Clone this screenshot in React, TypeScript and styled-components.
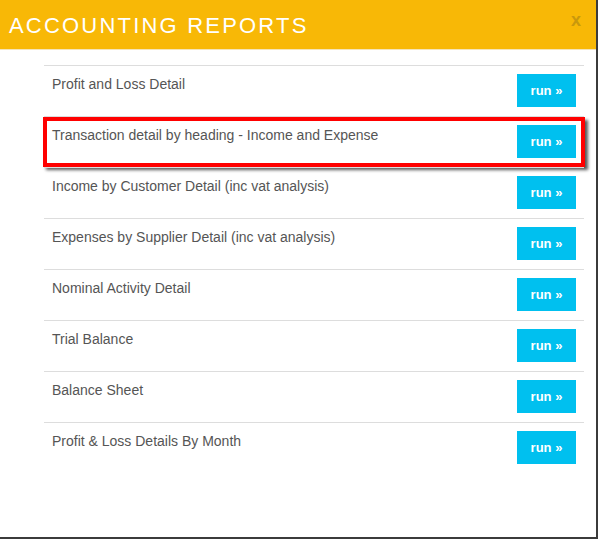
import React from "react";
import styled, { createGlobalStyle } from "styled-components";

const GlobalStyle = createGlobalStyle`
  html, body {
    margin: 0;
    padding: 0;
    background: #ffffff;
  }
  body {
    font-family: "Liberation Sans", Arial, sans-serif;
  }
`;

const reports = [
  "Profit and Loss Detail",
  "Transaction detail by heading - Income and Expense",
  "Income by Customer Detail (inc vat analysis)",
  "Expenses by Supplier Detail (inc vat analysis)",
  "Nominal Activity Detail",
  "Trial Balance",
  "Balance Sheet",
  "Profit & Loss Details By Month",
];

const Modal = styled.div`
  width: 598px;
  height: 539px;
  box-sizing: border-box;
  background: #ffffff;
  border-right: 2px solid #3b3b3b;
  border-bottom: 2px solid #3b3b3b;
  display: flex;
  flex-direction: column;
`;

const Header = styled.div`
  height: 49px;
  background: #f8b806;
  border-bottom: 1px solid #f5e4b8;
  display: flex;
  align-items: center;
  justify-content: space-between;
  padding: 0 15px 0 9px;
`;

const Title = styled.h1`
  margin: 0;
  margin-top: 2px;
  font-family: "Liberation Sans", Arial, sans-serif;
  font-weight: normal;
  font-size: 22px;
  letter-spacing: 2.2px;
  color: #ffffff;
`;

const Close = styled.span`
  font-family: "Liberation Sans", Arial, sans-serif;
  font-weight: bold;
  font-size: 18px;
  color: #c9980c;
  margin-top: -9px;
`;

const Body = styled.div`
  padding: 15px 12px 0 44px;
`;

const List = styled.ul`
  list-style: none;
  margin: 0;
  padding: 0;
`;

const Row = styled.li<{ $highlight?: boolean }>`
  position: relative;
  display: flex;
  align-items: flex-start;
  justify-content: space-between;
  height: 51px;
  box-sizing: border-box;
  border-top: 1px solid #dddddd;
  padding: 8px 8px 0 8px;

  &::after {
    content: "";
    display: ${(p) => (p.$highlight ? "block" : "none")};
    position: absolute;
    top: 0;
    left: -1px;
    right: -1px;
    bottom: 0;
    border: 4px solid #ff0000;
    box-shadow: 3px 3px 3px rgba(0, 0, 0, 0.65);
    pointer-events: none;
  }
`;

const Label = styled.span`
  font-size: 14px;
  line-height: 20px;
  color: #555555;
`;

const RunButton = styled.button`
  width: 59px;
  height: 33px;
  border: none;
  background: #00c0ef;
  color: #ffffff;
  font-family: "Liberation Sans", Arial, sans-serif;
  font-weight: bold;
  font-size: 13px;
  padding: 0;
  cursor: pointer;
`;

export default function App() {
  return (
    <>
      <GlobalStyle />
      <Modal>
        <Header>
          <Title>ACCOUNTING REPORTS</Title>
          <Close>x</Close>
        </Header>
        <Body>
          <List>
            {reports.map((name, i) => (
              <Row key={name} $highlight={i === 1}>
                <Label>{name}</Label>
                <RunButton>run »</RunButton>
              </Row>
            ))}
          </List>
        </Body>
      </Modal>
    </>
  );
}
